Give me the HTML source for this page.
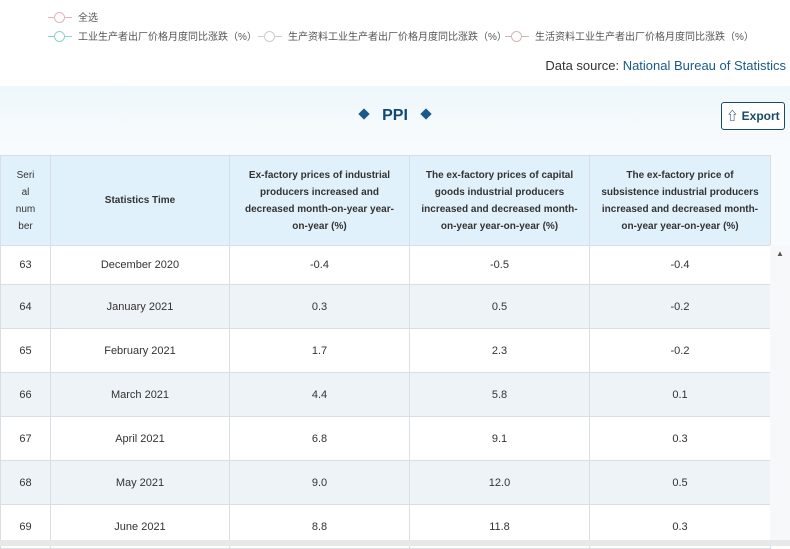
<!DOCTYPE html>
<html><head><meta charset="utf-8"><style>
body{margin:0;width:790px;height:546px;overflow:hidden;background:#fff;font-family:"Liberation Sans","Noto Sans CJK SC",sans-serif;position:relative}
.leg{position:absolute;font-size:10px;color:#555;display:flex;align-items:center}
.leg i{display:inline-block;width:24px;height:10px;position:relative;margin-right:6px}
.leg i:before{content:"";position:absolute;left:0;right:0;top:5px;height:1px;background:var(--c)}
.leg i:after{content:"";position:absolute;left:6px;top:0;width:9px;height:9px;border:1px solid var(--c);border-radius:50%;background:#fff}
.src{position:absolute;right:4px;top:58px;font-size:13px;color:#333}
.src span{color:#1a5a8a}
.panel{position:absolute;left:0;top:86px;width:790px;height:460px;background:linear-gradient(#eef7fc,#f8fbfd 60px)}
.title{position:absolute;left:0;width:790px;top:107px;text-align:center;font-size:16px;font-weight:bold;color:#0f4a75}
.dia{display:inline-block;width:8px;height:8px;background:#1a5a8a;transform:rotate(45deg);margin:0 14px;vertical-align:2px}
.btn{position:absolute;left:721px;top:102px;width:64px;height:28px;border:1px solid #1a4a6a;border-radius:3px;background:#fff;font-size:12px;color:#1a4a6a;font-weight:bold;box-sizing:border-box;line-height:26px;text-align:center}
table{position:absolute;left:0;top:155px;border-collapse:collapse;table-layout:fixed;width:770px;font-size:11px;color:#333}
td,th{border:1px solid #d8dee3;text-align:center;padding:0}
th{background:#e1f1fb;font-weight:bold;font-size:10px;line-height:17px;height:89px;color:#333}
tr.r{height:44px}
tr.f{height:39px}
td{background:#fff}
tr.a td{background:#eef3f7}
.sb{position:absolute;left:770px;top:245px;width:20px;height:295px;background:#f7f8f9}
.bot{position:absolute;left:0;top:540px;width:790px;height:6px;background:#e8e8e8;z-index:5}
</style></head><body>
<div class="leg" style="left:48px;top:9px"><i style="--c:#e8b4bc"></i>全选</div>
<div class="leg" style="left:48px;top:28px"><i style="--c:#8dd0d2"></i>工业生产者出厂价格月度同比涨跌（%）</div>
<div class="leg" style="left:258px;top:28px"><i style="--c:#ccc"></i>生产资料工业生产者出厂价格月度同比涨跌（%）</div>
<div class="leg" style="left:505px;top:28px"><i style="--c:#d8b4b8"></i>生活资料工业生产者出厂价格月度同比涨跌（%）</div>
<div class="src">Data source: <span>National Bureau of Statistics</span></div>
<div class="panel"></div>
<div class="title"><span class="dia"></span>PPI<span class="dia"></span></div>
<div class="btn">⇧ Export</div>
<table>
<colgroup><col style="width:50px"><col style="width:179px"><col style="width:180px"><col style="width:180px"><col style="width:181px"></colgroup>
<tr><th style="font-weight:normal">Seri<br>al<br>num<br>ber</th><th>Statistics Time</th><th>Ex-factory prices of industrial<br>producers increased and<br>decreased month-on-year year-<br>on-year (%)</th><th>The ex-factory prices of capital<br>goods industrial producers<br>increased and decreased month-<br>on-year year-on-year (%)</th><th>The ex-factory price of<br>subsistence industrial producers<br>increased and decreased month-<br>on-year year-on-year (%)</th></tr>
<tr class="f"><td>63</td><td>December 2020</td><td>-0.4</td><td>-0.5</td><td>-0.4</td></tr>
<tr class="r a"><td>64</td><td>January 2021</td><td>0.3</td><td>0.5</td><td>-0.2</td></tr>
<tr class="r"><td>65</td><td>February 2021</td><td>1.7</td><td>2.3</td><td>-0.2</td></tr>
<tr class="r a"><td>66</td><td>March 2021</td><td>4.4</td><td>5.8</td><td>0.1</td></tr>
<tr class="r"><td>67</td><td>April 2021</td><td>6.8</td><td>9.1</td><td>0.3</td></tr>
<tr class="r a"><td>68</td><td>May 2021</td><td>9.0</td><td>12.0</td><td>0.5</td></tr>
<tr class="r"><td>69</td><td>June 2021</td><td>8.8</td><td>11.8</td><td>0.3</td></tr>
</table>
<div class="sb"><div style="font-size:8px;color:#555;text-align:center;margin-top:4px">▲</div></div>
<div class="bot"></div>
</body></html>
